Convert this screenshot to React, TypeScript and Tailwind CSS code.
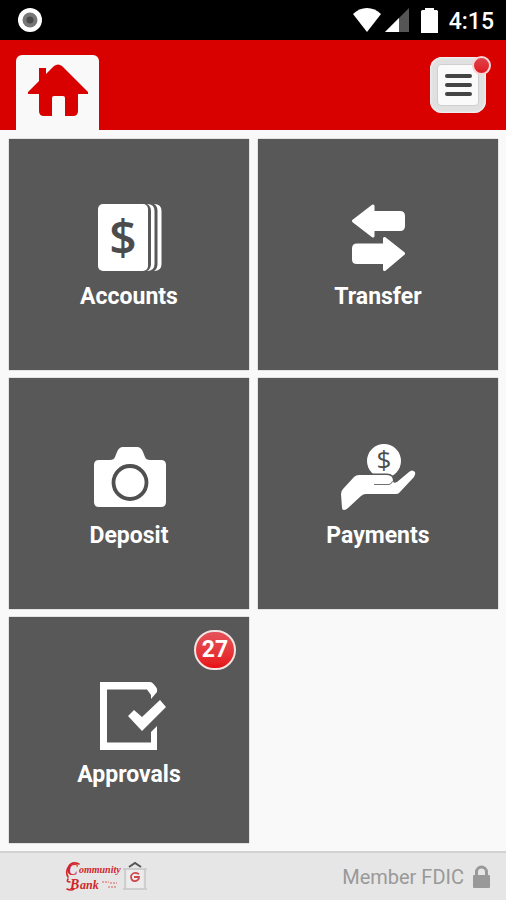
import React from 'react';

interface Tile {
  label: string;
  icon: React.ReactNode;
  badge?: number;
}

const ICON_CLASSES = 'h-[78px] w-20 text-white';

const AccountsIcon: React.FC = () => (
  <svg viewBox="0 0 80 78" className={ICON_CLASSES} fill="currentColor" aria-hidden="true">
    <rect x="9" y="0" width="50" height="67" rx="5" />
    <path d="M58 0Q65.500 0 65.500 7V60Q65.500 67 58 67Q62 65 62 60V7Q62 2 58 0Z" />
    <path d="M65 0Q72.500 0 72.500 7V60Q72.500 67 65 67Q68.500 65 68.500 60V7Q68.500 2 65 0Z" />
    <text x="34" y="51" textAnchor="middle" className="fill-[#4c4c4c] font-['Open_Sans',sans-serif] text-[48px] font-semibold">$</text>
  </svg>
);

const TransferIcon: React.FC = () => (
  <svg viewBox="0 0 80 78" className={ICON_CLASSES} fill="currentColor" stroke="currentColor" strokeWidth="3" strokeLinejoin="round" aria-hidden="true">
    <path d="M15.500 17L35 2V8.500H62Q65.500 8.500 65.500 12V22Q65.500 25.500 62 25.500H35V32Z" />
    <path d="M65.500 49.500L46.500 34.500V41H19Q15.500 41 15.500 44.500V55.500Q15.500 58.500 19 58.500H46.500V65.500Z" />
  </svg>
);

const DepositIcon: React.FC = () => (
  <svg viewBox="0 0 80 78" className={ICON_CLASSES} fill="currentColor" aria-hidden="true">
    <path d="M10 17H21Q25 17 26 14L28 9Q30 4 34 4H48Q52 4 54 9L56 14Q57 17 61 17H72Q77 17 77 22V59Q77 64 72 64H10Q5 64 5 59V22Q5 17 10 17Z" />
    <circle cx="41" cy="39.500" r="16.500" fill="none" stroke="#505050" strokeWidth="3.800" />
  </svg>
);

const PaymentsIcon: React.FC = () => (
  <svg viewBox="0 0 80 78" className={ICON_CLASSES} fill="currentColor" aria-hidden="true">
    <circle cx="46" cy="18" r="17" />
    <path
      d="M3 51Q3 48 5 46L16 34Q18 32 21 32H49Q55 32 55 38Q55 41 59 39L71 29Q74 26 77 29Q78 31 76 34L61 50Q60 51 58 51H28Q25 51 23 53L10 65Q8 67 6 67Q4 67 4 65Z"
      stroke="#585858"
      strokeWidth="3"
      paintOrder="stroke"
    />
    <path d="M36 41.500H51Q54 41 54.500 38" fill="none" stroke="#707070" strokeWidth="1" />
    <text x="46" y="26" textAnchor="middle" className="fill-[#4c4c4c] font-['Open_Sans',sans-serif] text-[26px] font-medium">$</text>
  </svg>
);

const ApprovalsIcon: React.FC = () => (
  <svg viewBox="0 0 80 78" className={ICON_CLASSES} fill="currentColor" aria-hidden="true">
    <path d="M11 0H61Q63 0 64.500 2L67 5Q69 7 68 10L62 17V13L58 7.500H18V60.500H62V50L68 44V68H11Z" />
    <path d="M39 34L45 28L53 35L71 18L77 25L53 49Z" />
  </svg>
);

const TILES: Tile[] = [
  { label: 'Accounts', icon: <AccountsIcon /> },
  { label: 'Transfer', icon: <TransferIcon /> },
  { label: 'Deposit', icon: <DepositIcon /> },
  { label: 'Payments', icon: <PaymentsIcon /> },
  { label: 'Approvals', icon: <ApprovalsIcon />, badge: 27 },
];

const StatusBar: React.FC = () => (
  <div className="flex h-10 items-center justify-between bg-black pr-3 pl-[18px] text-white">
    <svg viewBox="0 0 24 24" className="size-6" aria-hidden="true">
      <circle cx="12" cy="12" r="12" fill="#fff" />
      <circle cx="12" cy="12" r="7.500" fill="#777" />
      <circle cx="12" cy="12" r="3.500" fill="#4a4a4a" />
    </svg>
    <div className="flex items-center">
      <svg viewBox="0 0 28 24" className="h-6 w-7" fill="currentColor" aria-hidden="true">
        <path d="M14 24L0 6Q6 0 14 0T28 6Z" />
      </svg>
      <svg viewBox="0 0 24 24" className="ml-1 size-6" aria-hidden="true">
        <path d="M24 0V24H0Z" fill="#555" />
        <path d="M14 10V24H0Z" fill="#fff" />
      </svg>
      <svg viewBox="0 0 17 25" className="ml-3 h-[25px] w-[17px]" fill="currentColor" aria-hidden="true">
        <path d="M4 2V0H13V2H15.500Q17 2 17 3.500V25H0V3.500Q0 2 1.500 2Z" />
      </svg>
      <span className="ml-[11px] pt-[3px] text-[23px] leading-6 font-medium">4:15</span>
    </div>
  </div>
);

const Header: React.FC = () => (
  <header className="flex h-[90px] items-end justify-between bg-[#d90000] pr-5 pl-4">
    <a href="#home" aria-label="Home" className="flex h-[75px] w-[83px] justify-center rounded-t-md bg-[#f9f9f9] pt-[9px]">
      <svg viewBox="0 0 62 54" className="h-[54px] w-[62px]" fill="#d90000" aria-hidden="true">
        <path d="M12 4H19V10L27 2Q31 -1 35 2L61 28V30H51V47Q51 52 46 52H38V34Q38 32 36 32H27Q25 32 25 34V52H17Q12 52 12 47V30H1V28L12 17Z" />
      </svg>
    </a>
    <button
      type="button"
      aria-label="Menu"
      className="relative mb-[17px] flex size-14 items-center justify-center rounded-xl bg-[#e0e0e0] shadow-[inset_0_0_2px_1px_#f4f4f4]"
    >
      <span className="flex size-[42px] flex-col items-center justify-center gap-[5px] rounded-sm border border-[#cfcfcf] bg-[#fafafa]">
        <span className="h-1 w-[27px] rounded-full bg-[#444]" />
        <span className="h-1 w-[27px] rounded-full bg-[#444]" />
        <span className="h-1 w-[27px] rounded-full bg-[#444]" />
      </span>
      <span className="absolute -top-px -right-[5px] size-[19px] rounded-full border-2 border-[#f6d5d7] bg-linear-to-b from-[#e0404a] to-[#e01822]" />
    </button>
  </header>
);

const BankLogo: React.FC = () => (
  <svg viewBox="0 0 84 38" className="h-[38px] w-[84px]" role="img" aria-label="Community Bank">
    <g className="fill-[#d0262b] font-['Liberation_Serif',serif] font-bold italic">
      <text x="3" y="17" className="text-[16px]">C</text>
      <text x="15" y="15" className="text-[10px]">ommunity</text>
      <text x="6" y="31" className="text-[14px]">B</text>
      <text x="16" y="31" className="text-[12px]">ank</text>
    </g>
    <path d="M15 6Q8 3 5 8Q1 14 4 19M4 21Q2 24 6 24M3 31Q7 33 10 31" fill="none" stroke="#d0262b" strokeWidth="1.600" strokeLinecap="round" />
    <path d="M38 24H45M46 25H53M44 29H52" stroke="#e08c8f" strokeWidth="1.500" strokeDasharray="2 1" />
    <path d="M65 9L71 5L77 9" fill="none" stroke="#555" strokeWidth="2" />
    <path d="M59 11H83M61 11V30M81 11V30M59 31H83" fill="none" stroke="#c6c6c6" strokeWidth="1.500" />
    <rect x="63" y="12" width="16" height="18" fill="#ececec" />
    <path d="M75 16Q69 13 67 18Q67 24 72 23Q75 22 75 19L70 19" fill="none" stroke="#d0464a" strokeWidth="1.800" />
  </svg>
);

const Footer: React.FC = () => (
  <footer className="flex h-[49px] items-center justify-between border-t-2 border-[#d2d2d2] bg-[#e6e6e6] pr-4 pl-16">
    <BankLogo />
    <div className="flex items-center gap-[9px] text-[#999]">
      <span className="text-xl leading-6">Member FDIC</span>
      <svg viewBox="0 0 17 23" className="h-[23px] w-[17px]" aria-hidden="true">
        <path d="M3.500 11V7A5 5 0 0 1 13.500 7V11" fill="none" stroke="currentColor" strokeWidth="3" />
        <rect y="10" width="17" height="13" rx="1" fill="currentColor" />
      </svg>
    </div>
  </footer>
);

const App: React.FC = () => (
  <div className="flex min-h-screen flex-col bg-[#f9f9f9] font-[Roboto,sans-serif]">
    <StatusBar />
    <Header />
    <main className="grid flex-1 grid-cols-2 grid-rows-[231px_231px_1fr] gap-x-[9px] gap-y-2 pt-[9px] pr-2 pb-2 pl-[9px]">
      {TILES.map(({ label, icon, badge }) => (
        <button
          key={label}
          type="button"
          className="relative flex flex-col items-center justify-start bg-[#585858] pt-[65px] text-white shadow-[0_0_1px_#777]"
        >
          {icon}
          <span className="text-[23px] leading-[30px] font-bold">{label}</span>
          {badge !== undefined && (
            <span className="absolute top-[13px] right-[13px] flex h-10 w-[42px] items-center justify-center rounded-full border-2 border-[#f3e4e4] bg-linear-to-b from-[#e4525a] to-[#e60a12] text-[23px] leading-6 font-bold">
              {badge}
            </span>
          )}
        </button>
      ))}
    </main>
    <Footer />
  </div>
);

export default App;
